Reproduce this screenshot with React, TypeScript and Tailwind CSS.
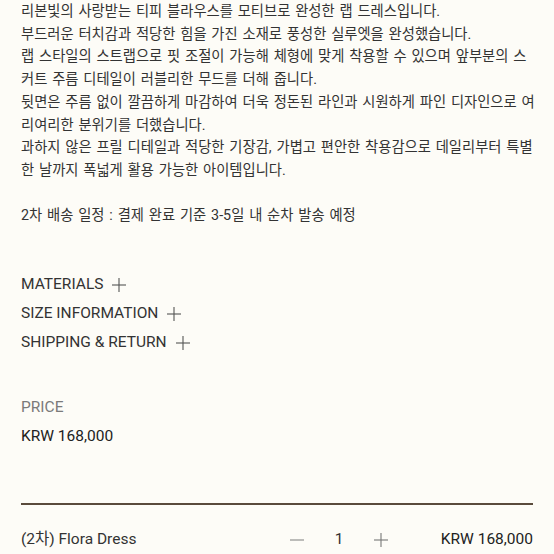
import React from 'react';

const lines = [
    '리본빛의 사랑받는 티피 블라우스를 모티브로 완성한 랩 드레스입니다.',
    '부드러운 터치감과 적당한 힘을 가진 소재로 풍성한 실루엣을 완성했습니다.',
    '랩 스타일의 스트랩으로 핏 조절이 가능해 체형에 맞게 착용할 수 있으며 앞부분의 스',
    '커트 주름 디테일이 러블리한 무드를 더해 줍니다.',
    '뒷면은 주름 없이 깔끔하게 마감하여 더욱 정돈된 라인과 시원하게 파인 디자인으로 여',
    '리여리한 분위기를 더했습니다.',
    '과하지 않은 프릴 디테일과 적당한 기장감, 가볍고 편안한 착용감으로 데일리부터 특별',
    '한 날까지 폭넓게 활용 가능한 아이템입니다.',
];

const sections = ['MATERIALS', 'SIZE INFORMATION', 'SHIPPING & RETURN'];

const PlusIcon = ({ color = '#555' }: { color?: string }) => (
    <svg width="14" height="14" viewBox="0 0 14 14" fill="none" stroke={color} strokeWidth="1.1">
        <line x1="7" y1="0" x2="7" y2="14" />
        <line x1="0" y1="7" x2="14" y2="7" />
    </svg>
);

const MinusIcon = () => (
    <svg width="14" height="14" viewBox="0 0 14 14" fill="none" stroke="#888" strokeWidth="1.1">
        <line x1="0" y1="7" x2="14" y2="7" />
    </svg>
);

const App: React.FC = () => {
    return (
        <div
            className="min-h-[554px] bg-[#fdfcf7] px-[21px] text-[#333]"
            style={{ fontFamily: 'Roboto, "Noto Sans CJK KR", sans-serif' }}
        >
            <div className="text-[14.3px] leading-[22.7px] [word-spacing:1.3px]">
                {lines.map((l) => (
                    <div key={l} className="whitespace-nowrap">{l}</div>
                ))}
                <div className="mt-[22.7px] whitespace-nowrap">2차 배송 일정 : 결제 완료 기준 3-5일 내 순차 발송 예정</div>
            </div>

            <div className="mt-[43px] flex flex-col">
                {sections.map((s) => (
                    <div key={s} className="flex h-[29px] items-center gap-[9px] text-[15.5px] text-[#333]">
                        <span>{s}</span>
                        <PlusIcon />
                    </div>
                ))}
            </div>

            <div className="mt-[36px] flex flex-col text-[15.5px]">
                <div className="flex h-[29px] items-center text-[#7a7a7a]">PRICE</div>
                <div className="flex h-[29px] items-center text-[#222]">KRW 168,000</div>
            </div>

            <div className="mt-[51.5px] h-[2px] bg-[#5a4b3c]" />

            <div className="mt-[20.5px] flex h-[29px] items-center text-[15.5px] text-[#333]">
                <div className="flex-1">(2차) Flora Dress</div>
                <div className="flex w-[42px] justify-center"><MinusIcon /></div>
                <div className="w-[42px] text-center">1</div>
                <div className="flex w-[42px] justify-center"><PlusIcon color="#777" /></div>
                <div className="w-[131px] text-right text-[#222]">KRW 168,000</div>
            </div>
        </div>
    );
};

export default App;
